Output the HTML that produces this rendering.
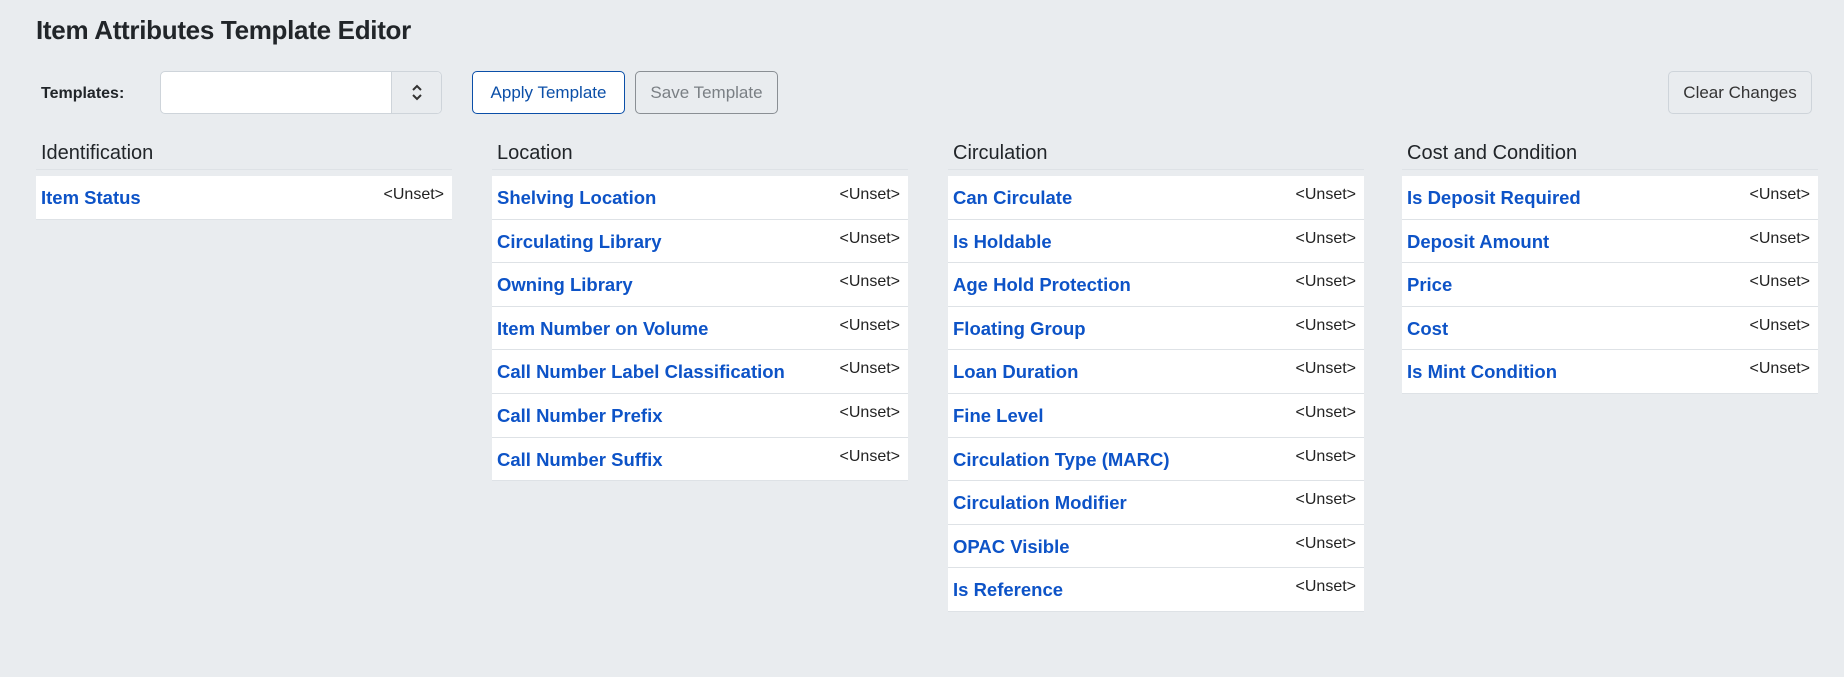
<!DOCTYPE html>
<html><head><meta charset="utf-8"><style>
*{box-sizing:border-box}
body{margin:0;width:1844px;height:677px;background:#e9ecef;font-family:"Liberation Sans",sans-serif;color:#212529;position:relative;overflow:hidden}
h1{position:absolute;left:36px;top:15px;margin:0;font-size:26px;font-weight:bold;letter-spacing:-0.3px}
.lbl{position:absolute;left:41px;top:85px;font-weight:bold;font-size:16px}
.sel{position:absolute;left:160px;top:71px;width:282px;height:43px;background:#fff;border:1px solid #ced4da;border-radius:5px;overflow:hidden}
.sel .arr{position:absolute;right:0;top:0;width:50px;height:100%;background:#e9ecef;border-left:1px solid #ced4da}
.btn{position:absolute;top:71px;height:43px;border:1px solid;border-radius:5px;font-size:17px;line-height:41px;text-align:center}
.apply{left:472px;width:153px;border-color:#0b4fa8;color:#0b4fa8;background:#fff}
.save{left:635px;width:143px;border-color:#8a8f94;color:#7a7f84;background:#e9ecef}
.clear{left:1668px;width:144px;border-color:#ced4da;color:#333;background:#e9ecef}
.col{position:absolute;top:142px;width:416px}
.col h2{margin:0;font-size:20px;font-weight:500;height:28px;padding-left:5px;border-bottom:1px solid #dee2e6;line-height:14px;padding-top:4px}
.rows{margin-top:6px}
.row{height:43.6px;background:#fff;border-bottom:1px solid #dee2e6;position:relative}
.row b{position:absolute;left:5px;top:11px;color:#0d53c7;font-size:18.5px}
.row span{position:absolute;right:8px;top:10px;font-size:16px;color:#222}
</style></head><body>
<h1>Item Attributes Template Editor</h1>
<div class="lbl">Templates:</div>
<div class="sel"><div class="arr"><svg width="50" height="41" viewBox="0 0 50 41"><path d="M21 18l4-4 4 4M21 23l4 4 4-4" fill="none" stroke="#333" stroke-width="2"/></svg></div></div>
<div class="btn apply">Apply Template</div>
<div class="btn save">Save Template</div>
<div class="btn clear">Clear Changes</div>

<div class="col" style="left:36px"><h2>Identification</h2><div class="rows">
<div class="row"><b>Item Status</b><span>&lt;Unset&gt;</span></div>
</div></div>

<div class="col" style="left:492px"><h2>Location</h2><div class="rows">
<div class="row"><b>Shelving Location</b><span>&lt;Unset&gt;</span></div>
<div class="row"><b>Circulating Library</b><span>&lt;Unset&gt;</span></div>
<div class="row"><b>Owning Library</b><span>&lt;Unset&gt;</span></div>
<div class="row"><b>Item Number on Volume</b><span>&lt;Unset&gt;</span></div>
<div class="row"><b>Call Number Label Classification</b><span>&lt;Unset&gt;</span></div>
<div class="row"><b>Call Number Prefix</b><span>&lt;Unset&gt;</span></div>
<div class="row"><b>Call Number Suffix</b><span>&lt;Unset&gt;</span></div>
</div></div>

<div class="col" style="left:948px"><h2>Circulation</h2><div class="rows">
<div class="row"><b>Can Circulate</b><span>&lt;Unset&gt;</span></div>
<div class="row"><b>Is Holdable</b><span>&lt;Unset&gt;</span></div>
<div class="row"><b>Age Hold Protection</b><span>&lt;Unset&gt;</span></div>
<div class="row"><b>Floating Group</b><span>&lt;Unset&gt;</span></div>
<div class="row"><b>Loan Duration</b><span>&lt;Unset&gt;</span></div>
<div class="row"><b>Fine Level</b><span>&lt;Unset&gt;</span></div>
<div class="row"><b>Circulation Type (MARC)</b><span>&lt;Unset&gt;</span></div>
<div class="row"><b>Circulation Modifier</b><span>&lt;Unset&gt;</span></div>
<div class="row"><b>OPAC Visible</b><span>&lt;Unset&gt;</span></div>
<div class="row"><b>Is Reference</b><span>&lt;Unset&gt;</span></div>
</div></div>

<div class="col" style="left:1402px"><h2>Cost and Condition</h2><div class="rows">
<div class="row"><b>Is Deposit Required</b><span>&lt;Unset&gt;</span></div>
<div class="row"><b>Deposit Amount</b><span>&lt;Unset&gt;</span></div>
<div class="row"><b>Price</b><span>&lt;Unset&gt;</span></div>
<div class="row"><b>Cost</b><span>&lt;Unset&gt;</span></div>
<div class="row"><b>Is Mint Condition</b><span>&lt;Unset&gt;</span></div>
</div></div>
</body></html>
